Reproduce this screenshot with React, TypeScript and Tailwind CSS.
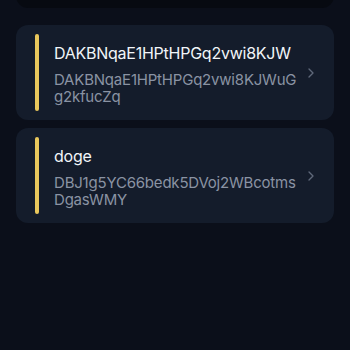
import { ChevronRight } from "lucide-react";

type Wallet = { name: string; address: string };

const wallets: Wallet[] = [
  { name: "DAKBNqaE1HPtHPGq2vwi8KJW", address: "DAKBNqaE1HPtHPGq2vwi8KJWuGg2kfucZq" },
  { name: "doge", address: "DBJ1g5YC66bedk5DVoj2WBcotmsDgasWMY" },
];

export default function App() {
  return (
    <div
      className="h-[350px] w-[350px] overflow-hidden bg-[#0b0f1a] px-4"
      style={{ fontFamily: "Inter, 'Noto Sans', sans-serif" }}
    >
      {/* card cut off at the top */}
      <div className="-mt-10 h-[48px] rounded-xl bg-[#070a11]" />

      <ul className="mt-[17px] space-y-2">
        {wallets.map((w) => (
          <li
            key={w.address}
            className="flex items-center rounded-xl bg-[#141c2b] py-[9px] pl-[19px] pr-[15px]"
          >
            <span className="w-[4px] self-stretch rounded-full bg-[#e9c75c]" />
            <div className="min-w-0 flex-1 py-[6.5px] pl-[15px]">
              <div className="mb-[6px] text-[16px] leading-6 tracking-[-0.25px] text-[#f1f5f9]">
                {w.name}
              </div>
              <div className="break-all text-[15px] leading-[17px] tracking-[-0.2px] text-[#8a93a3]">
                {w.address}
              </div>
            </div>
            <ChevronRight className="h-4 w-4 shrink-0 text-[#5f687a]" strokeWidth={2} />
          </li>
        ))}
      </ul>
    </div>
  );
}
